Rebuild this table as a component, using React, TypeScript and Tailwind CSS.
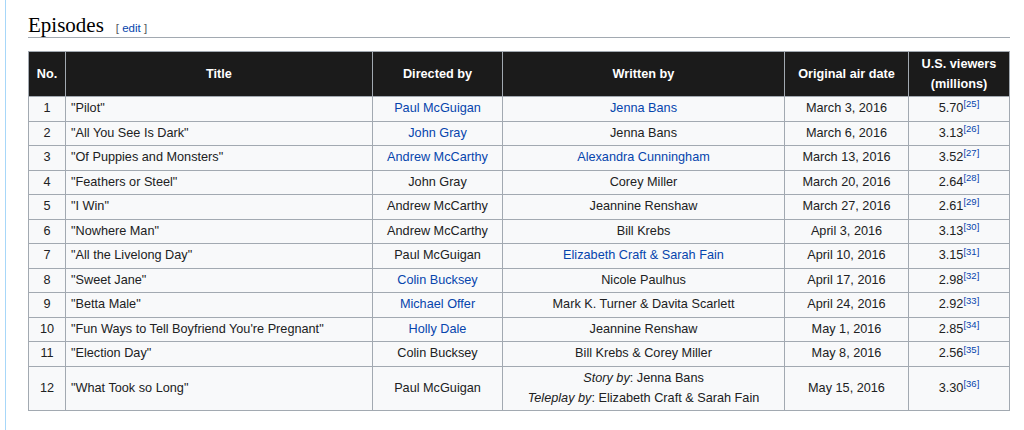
import React from "react";

type Cell = { text: string; link?: boolean };
type Row = {
  no: number;
  title: string;
  dir: Cell;
  writ: Cell | "special";
  date: string;
  viewers: string;
  ref: string;
};

const rows: Row[] = [
  { no: 1, title: '"Pilot"', dir: { text: "Paul McGuigan", link: true }, writ: { text: "Jenna Bans", link: true }, date: "March 3, 2016", viewers: "5.70", ref: "25" },
  { no: 2, title: '"All You See Is Dark"', dir: { text: "John Gray", link: true }, writ: { text: "Jenna Bans" }, date: "March 6, 2016", viewers: "3.13", ref: "26" },
  { no: 3, title: '"Of Puppies and Monsters"', dir: { text: "Andrew McCarthy", link: true }, writ: { text: "Alexandra Cunningham", link: true }, date: "March 13, 2016", viewers: "3.52", ref: "27" },
  { no: 4, title: '"Feathers or Steel"', dir: { text: "John Gray" }, writ: { text: "Corey Miller" }, date: "March 20, 2016", viewers: "2.64", ref: "28" },
  { no: 5, title: '"I Win"', dir: { text: "Andrew McCarthy" }, writ: { text: "Jeannine Renshaw" }, date: "March 27, 2016", viewers: "2.61", ref: "29" },
  { no: 6, title: '"Nowhere Man"', dir: { text: "Andrew McCarthy" }, writ: { text: "Bill Krebs" }, date: "April 3, 2016", viewers: "3.13", ref: "30" },
  { no: 7, title: '"All the Livelong Day"', dir: { text: "Paul McGuigan" }, writ: { text: "Elizabeth Craft & Sarah Fain", link: true }, date: "April 10, 2016", viewers: "3.15", ref: "31" },
  { no: 8, title: '"Sweet Jane"', dir: { text: "Colin Bucksey", link: true }, writ: { text: "Nicole Paulhus" }, date: "April 17, 2016", viewers: "2.98", ref: "32" },
  { no: 9, title: '"Betta Male"', dir: { text: "Michael Offer", link: true }, writ: { text: "Mark K. Turner & Davita Scarlett" }, date: "April 24, 2016", viewers: "2.92", ref: "33" },
  { no: 10, title: '"Fun Ways to Tell Boyfriend You\'re Pregnant"', dir: { text: "Holly Dale", link: true }, writ: { text: "Jeannine Renshaw" }, date: "May 1, 2016", viewers: "2.85", ref: "34" },
  { no: 11, title: '"Election Day"', dir: { text: "Colin Bucksey" }, writ: { text: "Bill Krebs & Corey Miller" }, date: "May 8, 2016", viewers: "2.56", ref: "35" },
  { no: 12, title: '"What Took so Long"', dir: { text: "Paul McGuigan" }, writ: "special", date: "May 15, 2016", viewers: "3.30", ref: "36" },
];

function C({ c }: { c: Cell }) {
  return c.link ? <span className="text-[#0645ad]">{c.text}</span> : <span>{c.text}</span>;
}

const th = "border border-[#a2a9b1] bg-[#1b1b1b] text-white font-bold text-center px-[5px] py-[2px] leading-[20px]";
const td = "border border-[#a2a9b1] px-[5px] py-[2px] leading-[19.55px]";

export default function App() {
  return (
    <div
      className="w-[1024px] h-[430px] bg-white pl-[5px] overflow-hidden"
      style={{ fontFamily: '"Liberation Sans", Arial, sans-serif' }}
    >
      <div className="h-full border-l border-[#a7d7f9] pl-[22px] pr-[14px]">
        <div className="flex items-baseline border-b border-[#a2a9b1] pt-[10.5px] h-[38px]">
          <h2
            className="text-[21px] leading-[28px] text-black"
            style={{ fontFamily: '"Liberation Serif", Georgia, serif' }}
          >
            Episodes
          </h2>
          <span className="ml-[12px] text-[11.5px] text-[#54595d]">
            [ <span className="text-[#0645ad]">edit</span> ]
          </span>
        </div>
        <table className="mt-[13px] border-collapse text-[12.7px] text-[#202122] table-fixed w-[981px]">
          <colgroup>
            <col className="w-[37px]" />
            <col className="w-[307px]" />
            <col className="w-[130px]" />
            <col className="w-[282px]" />
            <col className="w-[124px]" />
            <col className="w-[101px]" />
          </colgroup>
          <thead>
            <tr className="h-[45px]">
              <th className={th}>No.</th>
              <th className={th}>Title</th>
              <th className={th}>Directed by</th>
              <th className={th}>Written by</th>
              <th className={th}>Original air date</th>
              <th className={th}>
                U.S. viewers
                <br />
                (millions)
              </th>
            </tr>
          </thead>
          <tbody>
            {rows.map((r) => (
              <tr key={r.no} className="bg-[#f8f9fa]">
                <td className={`${td} text-center`}>{r.no}</td>
                <td className={`${td} text-left`}>{r.title}</td>
                <td className={`${td} text-center`}>
                  <C c={r.dir} />
                </td>
                <td className={`${td} text-center`}>
                  {r.writ === "special" ? (
                    <>
                      <div>
                        <i>Story by</i>: Jenna Bans
                      </div>
                      <div>
                        <i>Teleplay by</i>: Elizabeth Craft &amp; Sarah Fain
                      </div>
                    </>
                  ) : (
                    <C c={r.writ} />
                  )}
                </td>
                <td className={`${td} text-center`}>{r.date}</td>
                <td className={`${td} text-center`}>
                  {r.viewers}
                  <sup className="text-[9.5px] text-[#0645ad]">[{r.ref}]</sup>
                </td>
              </tr>
            ))}
          </tbody>
        </table>
      </div>
    </div>
  );
}
